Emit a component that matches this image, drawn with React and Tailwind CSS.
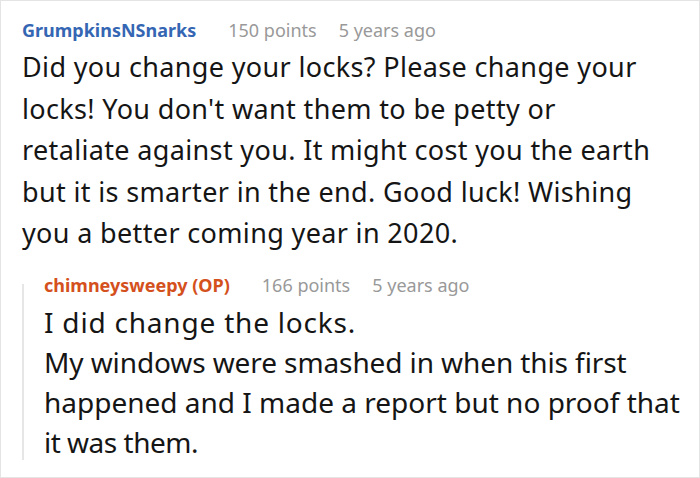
import React from "react";

const font = { fontFamily: '"Noto Sans", "Open Sans", sans-serif' };

const Meta = ({ name, nameClass, points, age }) => (
  <div className="flex items-baseline h-[28px] leading-[28px] text-[18px] whitespace-nowrap">
    <span className={`font-bold ${nameClass}`}>{name}</span>
    <span className="ml-[32px] text-[#999999]">{points}</span>
    <span className="ml-[22px] text-[#999999]">{age}</span>
  </div>
);

const commentLines = [
  "Did you change your locks? Please change your",
  "locks! You don't want them to be petty or",
  "retaliate against you. It might cost you the earth",
  "but it is smarter in the end. Good luck! Wishing",
  "you a better coming year in 2020.",
];

export default function App() {
  return (
    <div
      style={font}
      className="w-[700px] h-[478px] bg-white border border-[#e4e4e4] overflow-hidden text-[#151515]"
    >
      <div className="pl-[21px] pt-[15px]">
        <Meta
          name="GrumpkinsNSnarks"
          nameClass="text-[#3566b3]"
          points="150 points"
          age="5 years ago"
        />
        <div className="mt-[2px] text-[27px] leading-[41.6px] tracking-[0.35px] whitespace-nowrap">
          {commentLines.map((line) => (
            <div key={line}>{line}</div>
          ))}
        </div>
        <div className="mt-[17px] flex">
          <div className="w-[2px] bg-[#e6e6e6] mt-[13px] mb-[2px] shrink-0" />
          <div className="pl-[20px]">
            <Meta
              name="chimneysweepy (OP)"
              nameClass="text-[#d4501c]"
              points="166 points"
              age="5 years ago"
            />
            <div className="mt-[3px] text-[28px] leading-[40px] whitespace-nowrap">
              <div className="tracking-[0.8px]">I did change the locks.</div>
              <div className="tracking-[-0.1px]">My windows were smashed in when this first</div>
              <div>happened and I made a report but no proof that</div>
              <div className="tracking-[-0.5px]">it was them.</div>
            </div>
          </div>
        </div>
      </div>
    </div>
  );
}
